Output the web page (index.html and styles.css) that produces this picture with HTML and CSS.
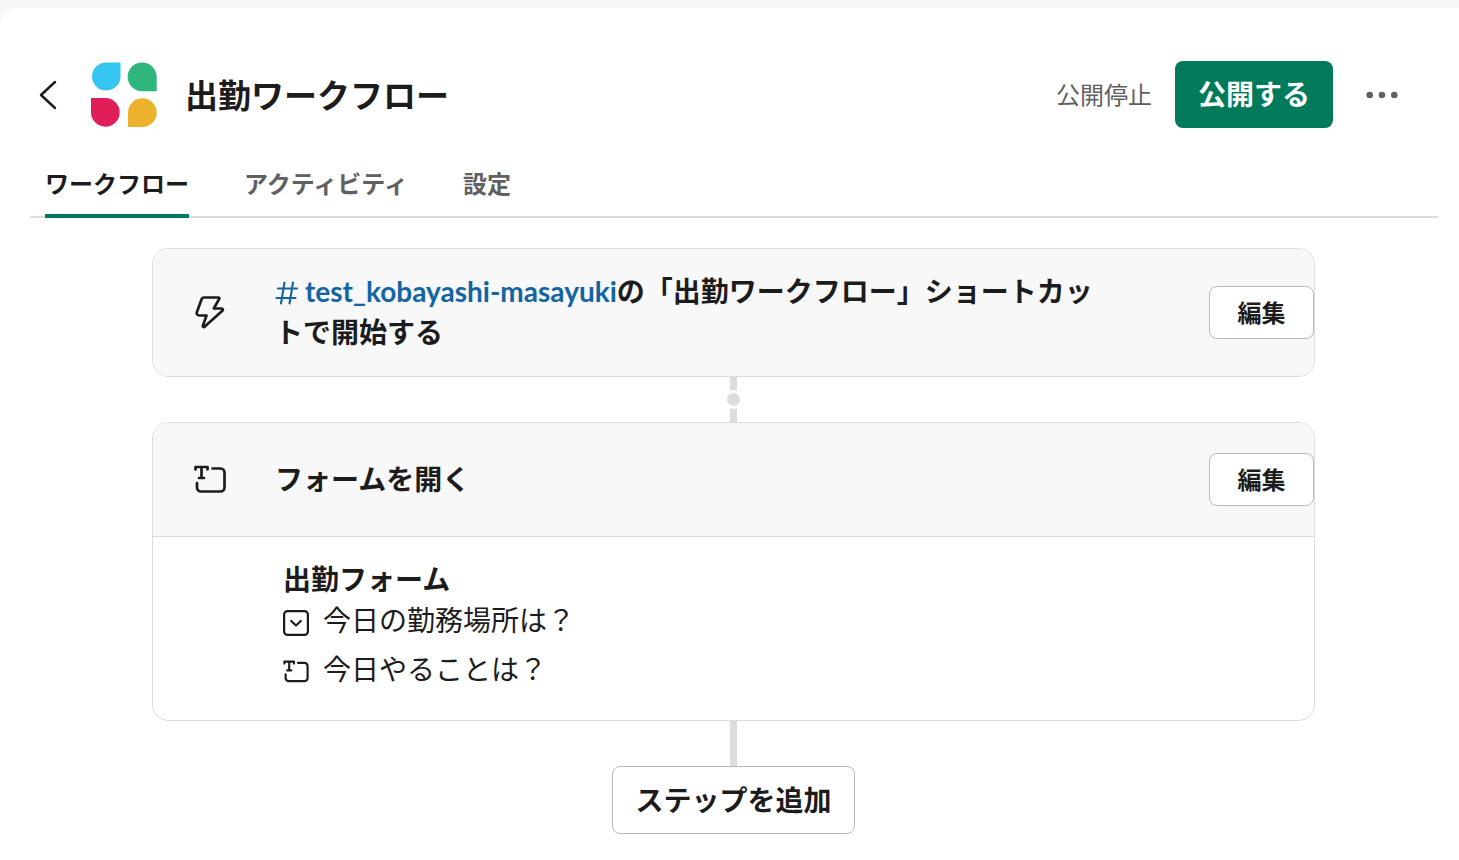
FILE: index.html
```html
<!DOCTYPE html>
<html lang="ja">
<head>
<meta charset="utf-8">
<meta name="viewport" content="width=device-width, initial-scale=1">
<title>出勤ワークフロー</title>
<link rel="stylesheet" href="styles.css">
</head>
<body>
<svg width="0" height="0" class="sprite" aria-hidden="true">
  <symbol id="icon-form" viewBox="0 0 32 30">
    <path d="M1.500 4.500V2h12v2.500M7.500 2v11M5 13h5" fill="none" stroke="currentColor" stroke-width="2.700" stroke-linecap="round" stroke-linejoin="round"/>
    <path d="M18.500 3.500H26.500a4 4 0 0 1 4 4V22.500a4 4 0 0 1-4 4H7a4 4 0 0 1-4-4V18" fill="none" stroke="currentColor" stroke-width="2.700" stroke-linecap="round"/>
  </symbol>
</svg>
<main class="panel">
  <header class="header">
    <button class="icon-button back" aria-label="戻る">
      <svg width="18" height="30" viewBox="0 0 18 30" fill="none" stroke="currentColor" stroke-width="2.400" stroke-linecap="round" stroke-linejoin="round"><path d="M16 2 2 15l14 13"/></svg>
    </button>
    <svg class="logo" width="66" height="66" viewBox="0 0 66 66" aria-hidden="true">
      <path fill="#36c5f0" d="M15 .5h14.500V14A14.250 14 0 1 1 15 .5Z"/>
      <path fill="#2eb67d" d="M51 .5A14.500 14.500 0 0 1 65.700 15v14.200H51A14.350 14.350 0 0 1 51 .5Z"/>
      <path fill="#e01e5a" d="M0 36h14.500A14.350 14.350 0 1 1 0 50.500Z"/>
      <path fill="#ecb22e" d="M37 65V50.500A14.350 14.350 0 1 1 51.400 65Z"/>
    </svg>
    <h1 class="title">出勤ワークフロー</h1>
    <div class="actions">
      <span class="status">公開停止</span>
      <button class="button primary">公開する</button>
      <button class="icon-button more" aria-label="その他">
        <svg width="32" height="8" viewBox="0 0 32 8" fill="currentColor"><circle cx="3.700" cy="4" r="3.300"/><circle cx="16" cy="4" r="3.300"/><circle cx="28.300" cy="4" r="3.300"/></svg>
      </button>
    </div>
  </header>

  <nav class="tabs">
    <button class="tab active">ワークフロー</button>
    <button class="tab">アクティビティ</button>
    <button class="tab">設定</button>
  </nav>

  <div class="steps">
    <section class="card">
      <div class="card-head trigger">
        <svg class="card-icon" width="32" height="34" viewBox="0 0 32 34" fill="none" stroke="currentColor" stroke-width="2.700" stroke-linejoin="round" stroke-linecap="round" aria-hidden="true"><path d="M9.500 2.500H24.500a.8 .8 0 0 1 .7 1.300L19.800 13.500H27.500a1.300 1.300 0 0 1 .9 2.300L10.800 31.500a1 1 0 0 1-1.800-1L12.500 20.500H5.200A2.500 2.500 0 0 1 2.900 17L7.800 3.800A2 2 0 0 1 9.500 2.500Z"/></svg>
        <h2 class="card-title"><a class="channel" href="#"><svg class="hash" width="24" height="24" viewBox="0 0 24 24" fill="none" stroke="currentColor" stroke-width="2.100" stroke-linecap="round" aria-hidden="true"><path d="M3 7.500H22M1.500 17H20.500M9.500 1.500 6 22.500M18 1.500 14.500 22.500"/></svg>test_kobayashi-masayuki</a>の「出勤ワークフロー」ショートカットで開始する</h2>
        <button class="button edit">編集</button>
      </div>
    </section>
    <div class="connector"><span class="dot"></span></div>
    <section class="card">
      <div class="card-head divided">
        <svg class="card-icon" width="32" height="30" aria-hidden="true"><use href="#icon-form"/></svg>
        <h2 class="card-title">フォームを開く</h2>
        <button class="button edit">編集</button>
      </div>
      <div class="card-body">
        <h3 class="form-title">出勤フォーム</h3>
        <ul class="questions">
          <li class="question"><svg class="question-icon" width="26" height="26" viewBox="0 0 26 26" fill="none" stroke="currentColor" stroke-width="2.200" stroke-linecap="round" stroke-linejoin="round" aria-hidden="true"><rect x="1.100" y="1.100" width="23.800" height="23.800" rx="3.500"/><path d="m8.200 11 4.800 4.500 4.800-4.500"/></svg>今日の勤務場所は？</li>
          <li class="question"><svg class="question-icon" width="26" height="24" aria-hidden="true"><use href="#icon-form"/></svg>今日やることは？</li>
        </ul>
      </div>
    </section>
    <div class="connector"></div>
    <button class="button add">ステップを追加</button>
  </div>
</main>
</body>
</html>
```
FILE: styles.css
```css
* { box-sizing: border-box; }

body {
  margin: 0;
  padding-top: 8px;
  background: #f8f8f8;
  color: #1d1c1d;
  font-family: Lato, "Noto Sans CJK JP", sans-serif;
  font-size: 28px;
  line-height: 41px;
}

h1, h2, h3, ul { margin: 0; padding: 0; }
button { font: inherit; color: inherit; cursor: pointer; }
svg { flex: none; }
.sprite { position: absolute; }

.panel {
  min-height: calc(100vh - 8px);
  padding: 53px 21px 26px 30px;
  background: #fff;
  border-radius: 16px 0 0 0;
}

.header {
  display: flex;
  align-items: center;
  padding: 0 40px 0 9px;
}

.icon-button {
  display: flex;
  padding: 0;
  border: 0;
  background: none;
}

.logo { margin: 0 28px 0 34px; }
.title { font-size: 33px; line-height: 50px; font-weight: 700; }

.actions {
  display: flex;
  align-items: center;
  margin-left: auto;
  color: #616061;
}
.status { font-size: 24px; margin-right: 23px; }
.more { margin-left: 33px; }

.button {
  border: 1px solid #bbbabb;
  border-radius: 8px;
  background: #fff;
  font-weight: 700;
}
.primary {
  padding: 13px 23px;
  border: 0;
  background: #007a5a;
  color: #fff;
}

.tabs {
  display: flex;
  gap: 55px;
  margin-top: 30px;
  padding-left: 15px;
  box-shadow: inset 0 -2px #ddd;
}
.tab {
  padding: 5px 0 10px;
  border: 0;
  border-bottom: 4px solid transparent;
  background: none;
  color: #616061;
  font-size: 24px;
  font-weight: 700;
}
.active { border-color: #007a5a; color: #1d1c1d; }

.steps {
  display: flex;
  flex-direction: column;
  align-items: center;
  padding: 30px 123px 0 122px;
}

.card {
  width: 100%;
  border: 1px solid #ddd;
  border-radius: 16px;
  overflow: hidden;
}
.card-head {
  display: flex;
  align-items: center;
  padding-left: 41px;
  background: #f8f8f8;
}
.trigger { padding-top: 22px; padding-bottom: 23px; }
.divided { padding-top: 30px; padding-bottom: 30px; border-bottom: 1px solid #ddd; }
.card-title {
  flex: 1;
  margin: 0 100px 0 49px;
  font-size: 28px;
  font-weight: 700;
}
.channel { color: #1264a3; text-decoration: none; }
.hash { margin-right: 6px; vertical-align: -3px; }
.edit {
  min-width: 105px;
  padding: 5px 24px;
  font-size: 24px;
}

.card-body { padding: 22px 24px 22px 130px; }
.form-title { font-size: 28px; font-weight: 700; }
.questions { list-style: none; }
.question {
  display: flex;
  align-items: center;
  gap: 14px;
  margin-bottom: 8px;
}
.question-icon { margin-top: 4px; }

.connector {
  display: flex;
  align-items: center;
  justify-content: center;
  width: 7px;
  height: 45px;
  background: #ddd;
}
.dot {
  flex: none;
  width: 19px;
  height: 19px;
  border: 3px solid #fff;
  border-radius: 50%;
  background: #ddd;
}

.add { padding: 13px 22px 12px; }
```
